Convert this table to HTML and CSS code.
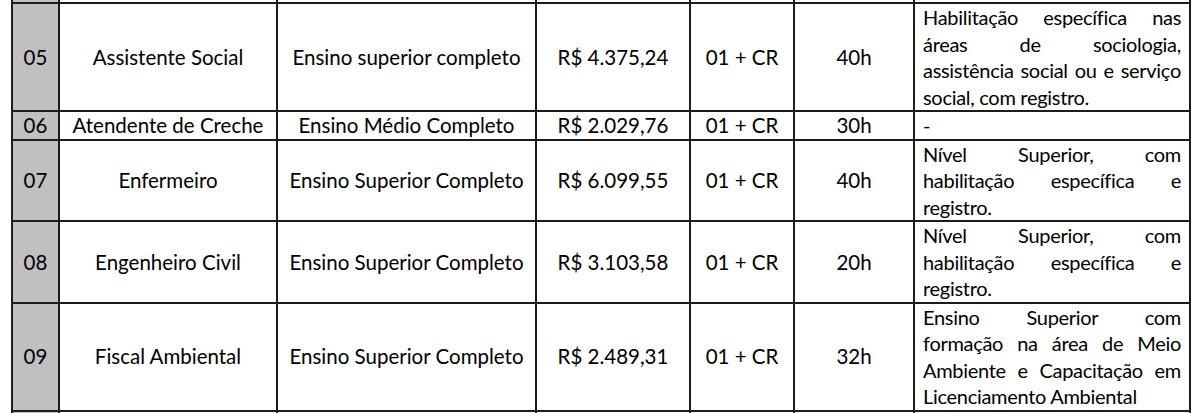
FILE: index.html
```html
<!DOCTYPE html>
<html lang="pt-BR">
<head>
<meta charset="utf-8">
<title>Cargos</title>
<link rel="stylesheet" href="styles.css">
</head>
<body>
<div class="page">
<table class="cargos">
  <colgroup>
    <col class="c-num"><col class="c-cargo"><col class="c-esc"><col class="c-sal"><col class="c-vag"><col class="c-ch"><col class="c-req">
  </colgroup>
  <tbody>
    <tr class="stub stub-top">
      <td class="num"></td><td></td><td></td><td></td><td></td><td></td><td class="req"></td>
    </tr>
    <tr>
      <td class="num">05</td>
      <td>Assistente Social</td>
      <td>Ensino superior completo</td>
      <td>R$ 4.375,24</td>
      <td>01 + CR</td>
      <td>40h</td>
      <td class="req"><span class="jl">Habilitação específica nas</span><span class="jl">áreas de sociologia,</span><span class="jl">assistência social ou e serviço</span><span class="ll">social, com registro.</span></td>
    </tr>
    <tr>
      <td class="num">06</td>
      <td>Atendente de Creche</td>
      <td>Ensino Médio Completo</td>
      <td>R$ 2.029,76</td>
      <td>01 + CR</td>
      <td>30h</td>
      <td class="req"><span class="ll">-</span></td>
    </tr>
    <tr>
      <td class="num">07</td>
      <td>Enfermeiro</td>
      <td>Ensino Superior Completo</td>
      <td>R$ 6.099,55</td>
      <td>01 + CR</td>
      <td>40h</td>
      <td class="req"><span class="jl">Nível Superior, com</span><span class="jl">habilitação específica e</span><span class="ll">registro.</span></td>
    </tr>
    <tr>
      <td class="num">08</td>
      <td>Engenheiro Civil</td>
      <td>Ensino Superior Completo</td>
      <td>R$ 3.103,58</td>
      <td>01 + CR</td>
      <td>20h</td>
      <td class="req"><span class="jl">Nível Superior, com</span><span class="jl">habilitação específica e</span><span class="ll">registro.</span></td>
    </tr>
    <tr>
      <td class="num">09</td>
      <td>Fiscal Ambiental</td>
      <td>Ensino Superior Completo</td>
      <td>R$ 2.489,31</td>
      <td>01 + CR</td>
      <td>32h</td>
      <td class="req"><span class="jl">Ensino Superior com</span><span class="jl">formação na área de Meio</span><span class="jl">Ambiente e Capacitação em</span><span class="ll">Licenciamento Ambiental</span></td>
    </tr>
    <tr class="stub stub-bottom">
      <td class="num"></td><td></td><td></td><td></td><td></td><td></td><td class="req"></td>
    </tr>
  </tbody>
</table>
</div>
</body>
</html>
```
FILE: styles.css
```css
html, body {
  margin: 0;
  padding: 0;
  background: #ffffff;
}
body {
  font-family: "Lato", "Liberation Sans", sans-serif;
  color: #000000;
  overflow: hidden;
}
.page {
  padding-left: 11px;
}
.cargos {
  border-collapse: collapse;
  table-layout: fixed;
  width: 1178px;
  font-size: 20.5px;
  line-height: 26.5px;
}
.c-num { width: 47px; }
.c-cargo { width: 218px; }
.c-esc { width: 259px; }
.c-sal { width: 154px; }
.c-vag { width: 104px; }
.c-ch { width: 120px; }
.c-req { width: 276px; }
.cargos td {
  border: 2px solid #1c1c1c;
  padding: 0;
  text-align: center;
  vertical-align: middle;
  white-space: nowrap;
}
.cargos td.num {
  background: #c0c0c0;
}
.cargos td.req {
  text-align: left;
  vertical-align: top;
  padding: 0 8px 0 8px;
  font-size: 20px;
  letter-spacing: -0.3px;
}
.jl {
  display: block;
  text-align: justify;
  text-align-last: justify;
}
.ll {
  display: block;
  text-align: left;
}
.stub td {
  line-height: 1px;
}
.stub-top td {
  height: 2px;
  border-top: none;
}
.stub-bottom td {
  height: 20px;
  border-bottom: none;
}
```
